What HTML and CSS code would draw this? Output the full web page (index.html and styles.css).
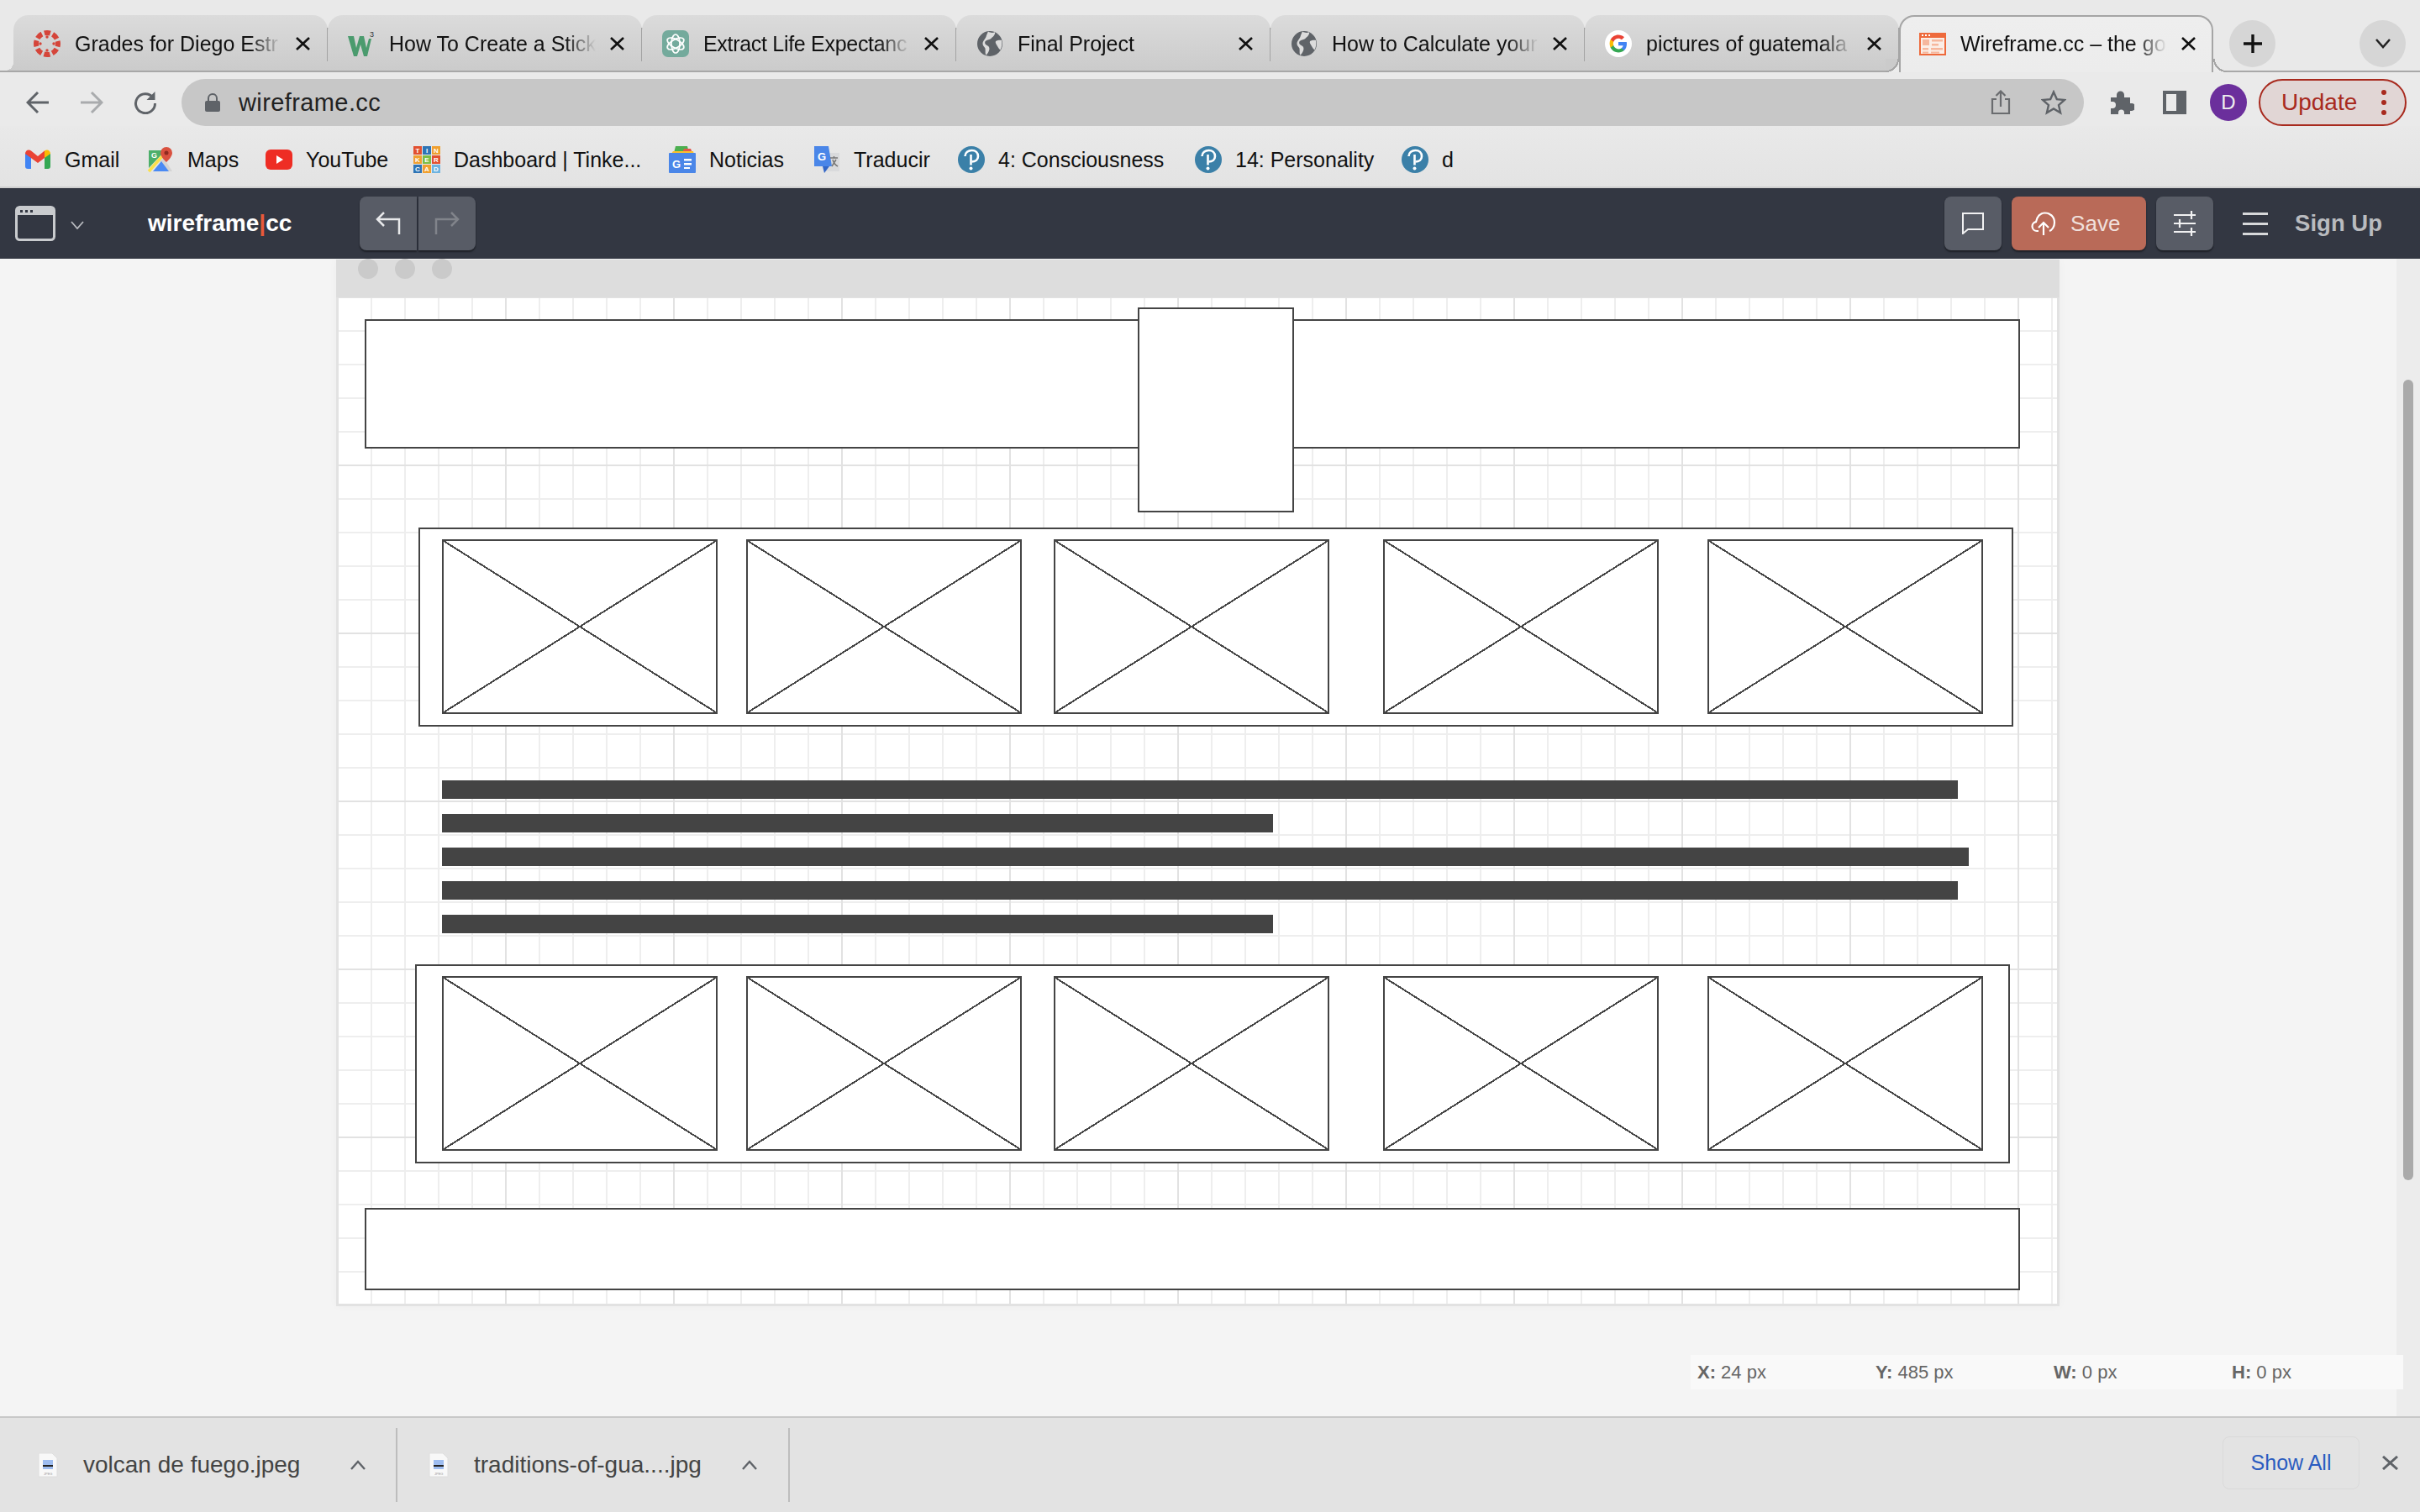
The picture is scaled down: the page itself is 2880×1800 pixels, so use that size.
FILE: index.html
```html
<!DOCTYPE html>
<html lang="en">

<head>
    <meta charset="UTF-8">
    <title>Wireframe.cc – the go-to wireframing tool</title>
    <link rel="stylesheet" href="styles.css">
</head>

<body>
    <!-- browser tabs -->
    <div class="tabstrip">
        <div class="tab">
            <svg class="favicon" viewBox="0 0 32 32"><circle cx="16" cy="16" r="13" fill="none" stroke="#d5453a" stroke-width="6" stroke-dasharray="7.200 3" stroke-dashoffset="3.600"/><g fill="#d5453a"><circle cx="16" cy="8" r="1.700"/><circle cx="16" cy="24" r="1.700"/><circle cx="8" cy="16" r="1.700"/><circle cx="24" cy="16" r="1.700"/></g></svg>
            <span class="tab-title">Grades for Diego Estr</span>
            <svg class="tab-x" viewBox="0 0 17 16"><use href="#close"/></svg>
        </div>
        <div class="tab">
            <svg class="favicon" viewBox="0 0 32 32"><path d="M0 7h7l3 14 4-14h5l3 14 3-11h3l-5 21h-4l-4-14-4 14H7z" fill="#4b9b6e"/><text x="26" y="8" class="tiny-sup">3</text></svg>
            <span class="tab-title">How To Create a Stick</span>
            <svg class="tab-x" viewBox="0 0 17 16"><use href="#close"/></svg>
        </div>
        <div class="tab">
            <svg class="favicon" viewBox="0 0 32 32"><rect width="32" height="32" rx="7" fill="#74aa9c"/><g fill="none" stroke="#fff" stroke-width="1.700"><ellipse cx="16" cy="16" rx="5" ry="11"/><ellipse cx="16" cy="16" rx="5" ry="11" transform="rotate(60 16 16)"/><ellipse cx="16" cy="16" rx="5" ry="11" transform="rotate(120 16 16)"/></g></svg>
            <span class="tab-title tab-title-tight">Extract Life Expectanc</span>
            <svg class="tab-x" viewBox="0 0 17 16"><use href="#close"/></svg>
        </div>
        <div class="tab">
            <svg class="favicon" viewBox="0 0 32 32"><use href="#globe"/></svg>
            <span class="tab-title">Final Project</span>
            <svg class="tab-x" viewBox="0 0 17 16"><use href="#close"/></svg>
        </div>
        <div class="tab">
            <svg class="favicon" viewBox="0 0 32 32"><use href="#globe"/></svg>
            <span class="tab-title">How to Calculate your</span>
            <svg class="tab-x" viewBox="0 0 17 16"><use href="#close"/></svg>
        </div>
        <div class="tab">
            <svg class="favicon" viewBox="0 0 32 32"><circle cx="16" cy="16" r="16" fill="#fff"/><path d="M26 16.300c0-.8-.1-1.500-.2-2.200H16v4.200h5.600c-.2 1.300-1 2.400-2.100 3.200v2.600h3.400c2-1.900 3.100-4.600 3.100-7.800z" fill="#4285f4"/><path d="M16 26.500c2.800 0 5.200-.9 6.900-2.500l-3.400-2.600c-.9.600-2.100 1-3.500 1-2.700 0-5-1.800-5.800-4.300H6.700v2.700C8.400 24.300 11.900 26.500 16 26.500z" fill="#34a853"/><path d="M10.200 18.100c-.5-1.400-.5-2.900 0-4.300v-2.700H6.700c-1.500 2.900-1.500 6.800 0 9.700z" fill="#fbbc05"/><path d="M16 9.700c1.500 0 2.900.5 4 1.600l3-3C21.100 6.500 18.700 5.500 16 5.500c-4.100 0-7.600 2.300-9.300 5.600l3.500 2.700c.8-2.400 3.100-4.100 5.800-4.100z" fill="#ea4335"/></svg>
            <span class="tab-title">pictures of guatemala</span>
            <svg class="tab-x" viewBox="0 0 17 16"><use href="#close"/></svg>
        </div>
        <div class="tab tab-active">
            <svg class="favicon" viewBox="0 0 32 32"><rect y="3" width="32" height="27" fill="#ee6a3c"/><rect x="2" y="9" width="28" height="19" fill="#fbeee7"/><path d="M3 5h2v2H3zM7 5h2v2H7zM11 5h2v2h-2z" fill="#fff"/><path d="M4 11h8v7H4zM15 11h13v2.500H15zM15 16h8v2.500h-8zM4 21h7v2.500H4zM14 21h14v2.500H14zM4 25.500h7v2H4zM14 25.500h10v2H14z" fill="#f6b79d"/></svg>
            <span class="tab-title">Wireframe.cc – the go</span>
            <svg class="tab-x" viewBox="0 0 17 16"><use href="#close"/></svg>
        </div>
        <div class="strip-btn strip-plus">
            <svg class="icon-plus" viewBox="0 0 22 22"><path d="M11 0v22M0 11h22" fill="none" stroke="#111" stroke-width="3.400"/></svg>
        </div>
        <div class="strip-btn strip-more">
            <svg class="icon-chev" viewBox="0 0 18 12"><path d="M1 1l8 9 8-9" fill="none" stroke="#222" stroke-width="2.500"/></svg>
        </div>
    </div>

    <!-- address bar row -->
    <div class="toolbar">
        <svg class="nav-icon" viewBox="0 0 28 28"><path d="M27 14H3M14 2L2 14l12 12" fill="none" stroke="#5f6368" stroke-width="3"/></svg>
        <svg class="nav-icon nav-off" viewBox="0 0 28 28"><path d="M1 14h24M14 2l12 12-12 12" fill="none" stroke="#a9abad" stroke-width="3"/></svg>
        <svg class="nav-icon" viewBox="0 0 28 28"><path d="M23 8a11.500 11.500 0 1 0 2.500 7" fill="none" stroke="#5f6368" stroke-width="3"/><path d="M25.500 1v10h-10z" fill="#5f6368"/></svg>
        <div class="omnibox">
            <svg class="lock" viewBox="0 0 18 22"><path d="M4 10V6a5 5 0 0 1 10 0v4" fill="none" stroke="#5f6368" stroke-width="2"/><rect y="9" width="18" height="13" rx="2" fill="#5f6368"/></svg>
            <span class="url">wireframe.cc</span>
            <svg class="share" viewBox="0 0 24 30"><path d="M7 11H2v17h20V11h-5M12 20V2M6.500 7L12 1.500 17.500 7" fill="none" stroke="#6a6c6f" stroke-width="2.200"/></svg>
            <svg class="star" viewBox="0 0 30 30"><path d="M15 2.500l3.800 8.600 9.200.9-7 6.100 2.100 9.200-8.100-4.800-8.100 4.800 2.100-9.200-7-6.100 9.200-.9z" fill="none" stroke="#5f6368" stroke-width="2.400"/></svg>
        </div>
        <svg class="ext" viewBox="0 0 30 30"><path d="M2 9h7V6a4.500 4.500 0 0 1 9 0v3h7v7h2a4.500 4.500 0 0 1 0 9h-2v4h-7v-2a3.500 3.500 0 0 0-7 0v2H2v-7h2a4 4 0 0 0 0-8H2z" fill="#5f6368"/></svg>
        <div class="sidepanel"></div>
        <div class="avatar">D</div>
        <div class="update">
            <span>Update</span>
            <span class="update-dots"><i></i><i></i><i></i></span>
        </div>
    </div>

    <!-- bookmarks -->
    <div class="bookmarks">
        <div class="bm bm-gmail">
            <svg viewBox="0 0 30 32"><path d="M0 9h7v18H3a3 3 0 0 1-3-3z" fill="#4285f4"/><path d="M23 9h7v15a3 3 0 0 1-3 3h-4z" fill="#34a853"/><path d="M0 9c0-4 4-6 7-3.500L15 12l8-6.500V14l-8 6-15-11z" fill="#ea4335"/><path d="M23 5.500C26 3 30 5 30 9l-7 5z" fill="#fbbc05"/></svg>
            Gmail
        </div>
        <div class="bm bm-maps">
            <svg viewBox="0 0 32 32"><path d="M2 5h20L2 26z" fill="#4caf6a"/><path d="M20 14l10 16h-6l-9-12z" fill="#d4d4d4"/><path d="M7 30l10-12 9 12z" fill="#4a8af4"/><path d="M2 30L18 12" stroke="#fbe04b" stroke-width="3.500"/><text x="5" y="14" class="maps-g">G</text><path d="M23 1a7 7 0 0 1 7 7c0 5-7 11-7 11s-7-6-7-11a7 7 0 0 1 7-7z" fill="#d9513f"/><circle cx="23" cy="8" r="2.500" fill="#8e2a20"/></svg>
            Maps
        </div>
        <div class="bm bm-yt">
            <svg viewBox="0 0 32 32"><rect y="4" width="32" height="24" rx="6" fill="#ee2d24"/><path d="M13 11l8 5-8 5z" fill="#fff"/></svg>
            YouTube
        </div>
        <div class="bm bm-tink">
            <div class="tink-icon">
                <b class="t-red">T</b><b class="t-blue">I</b><b class="t-orange">N</b>
                <b class="t-orange">K</b><b class="t-green">E</b><b class="t-red">R</b>
                <b class="t-blue">C</b><b class="t-orange">A</b><b class="t-sky">D</b>
            </div>
            Dashboard | Tinke...
        </div>
        <div class="bm bm-news">
            <svg viewBox="0 0 32 32"><path d="M6 8l2-8h14l2 8z" fill="#4caf50"/><path d="M16 8l2-5h8l2 5z" fill="#e2574c"/><path d="M2 10l3-4h24l1 4z" fill="#fbc02d"/><rect y="8" width="32" height="24" rx="1" fill="#4a86e8"/><text x="4" y="26" class="news-g">G</text><path d="M18 15h9v2.500h-9zM18 20h9v2.500h-9zM18 25h7v2h-7z" fill="#fff"/></svg>
            Noticias
        </div>
        <div class="bm bm-trans">
            <svg viewBox="0 0 30 32"><rect x="12" y="8" width="18" height="22" fill="#d9dadc"/><path d="M0 0h17l4 24H0z" fill="#4a86e8"/><path d="M10 24h8l-6 8z" fill="#3367c7"/><text x="4" y="17" class="news-g">G</text><path d="M19 14h9M23.500 12v2M21 24l5-8M22 16c1 4 4 7 6 8" fill="none" stroke="#777" stroke-width="1.500"/></svg>
            Traducir
        </div>
        <div class="bm bm-p1">
            <svg viewBox="0 0 32 32"><use href="#pearson"/></svg>
            4: Consciousness
        </div>
        <div class="bm bm-p2">
            <svg viewBox="0 0 32 32"><use href="#pearson"/></svg>
            14: Personality
        </div>
        <div class="bm bm-p3">
            <svg viewBox="0 0 32 32"><use href="#pearson"/></svg>
            d
        </div>
    </div>

    <!-- wireframe.cc app bar -->
    <div class="appbar">
        <svg class="win-icon" viewBox="0 0 48 42"><rect x="1.500" y="1.500" width="45" height="39" rx="4" fill="none" stroke="#c9cbce" stroke-width="3"/><path d="M3 4a2 2 0 0 1 2-2h38a2 2 0 0 1 2 2v7H3z" fill="#c9cbce"/><path d="M6 5h3v3H6zM12 5h3v3h-3zM18 5h3v3h-3z" fill="#333742"/></svg>
        <svg class="app-chev" viewBox="0 0 16 10"><path d="M1 1l7 8 7-8" fill="none" stroke="#b9bbc0" stroke-width="1.800"/></svg>
        <div class="logo">wireframe<span class="logo-bar">|</span>cc</div>
        <div class="history">
            <div class="hist-btn">
                <svg viewBox="0 0 30 28"><path d="M28 27V9H3M10 1L2 9l8 8" fill="none" stroke="#e8e9eb" stroke-width="2.500"/></svg>
            </div>
            <div class="hist-btn">
                <svg viewBox="0 0 30 28"><path d="M2 27V9h25M20 1l8 8-8 8" fill="none" stroke="#81848b" stroke-width="2.500"/></svg>
            </div>
        </div>
        <div class="app-right">
            <div class="app-btn">
                <svg class="comment" viewBox="0 0 26 26"><path d="M1 1h24v19H7l-6 5z" fill="none" stroke="#f1f1f2" stroke-width="2"/></svg>
            </div>
            <div class="save-btn">
                <svg class="cloud" viewBox="0 0 32 28"><path d="M9 23H7a5.500 5.500 0 0 1-1-10.900C7 6 11 1.500 16.500 1.500 23 1.500 28 6 28 13c0 5-3 9-6 10" fill="none" stroke="#fff" stroke-width="2.200"/><path d="M15 28V13M9 19l6-6 6 6" fill="none" stroke="#fff" stroke-width="2.200"/></svg>
                <span>Save</span>
            </div>
            <div class="app-btn">
                <svg class="sliders" viewBox="0 0 26 30"><path d="M0 5h26M0 15h26M0 25h26M21 0v10M7 10v10M21 20v10" fill="none" stroke="#f1f1f2" stroke-width="2.200"/></svg>
            </div>
            <div class="burger"><i></i><i></i><i></i></div>
            <div class="signup">Sign Up</div>
        </div>
    </div>

    <!-- editor area -->
    <div class="stage">
        <div class="canvas">
            <div class="canvas-head"><i></i><i></i><i></i></div>
            <div class="grid"></div>

            <div class="wf wf-top"></div>
            <div class="wf wf-tab"></div>

            <div class="wf wf-row wf-row-a"></div>
            <div class="wf-ph ph-1 ph-a"></div>
            <div class="wf-ph ph-2 ph-a"></div>
            <div class="wf-ph ph-3 ph-a"></div>
            <div class="wf-ph ph-4 ph-a"></div>
            <div class="wf-ph ph-5 ph-a"></div>

            <div class="wf-line line-1"></div>
            <div class="wf-line line-2"></div>
            <div class="wf-line line-3"></div>
            <div class="wf-line line-4"></div>
            <div class="wf-line line-5"></div>

            <div class="wf wf-row wf-row-b"></div>
            <div class="wf-ph ph-1 ph-b"></div>
            <div class="wf-ph ph-2 ph-b"></div>
            <div class="wf-ph ph-3 ph-b"></div>
            <div class="wf-ph ph-4 ph-b"></div>
            <div class="wf-ph ph-5 ph-b"></div>

            <div class="wf wf-foot"></div>
        </div>

        <div class="coords">
            <span class="coord"><b>X:</b> 24 px</span>
            <span class="coord"><b>Y:</b> 485 px</span>
            <span class="coord"><b>W:</b> 0 px</span>
            <span class="coord"><b>H:</b> 0 px</span>
        </div>

        <div class="scrollbar"><div class="thumb"></div></div>
    </div>

    <!-- downloads shelf -->
    <div class="shelf">
        <div class="dl">
            <svg class="dl-icon" viewBox="0 0 24 30"><use href="#jpeg"/></svg>
            <span class="dl-name">volcan de fuego.jpeg</span>
            <svg class="dl-caret" viewBox="0 0 18 12"><path d="M1 11l8-9 8 9" fill="none" stroke="#5f6368" stroke-width="2.400"/></svg>
        </div>
        <div class="dl dl-two">
            <svg class="dl-icon" viewBox="0 0 24 30"><use href="#jpeg"/></svg>
            <span class="dl-name">traditions-of-gua....jpg</span>
            <svg class="dl-caret" viewBox="0 0 18 12"><path d="M1 11l8-9 8 9" fill="none" stroke="#5f6368" stroke-width="2.400"/></svg>
        </div>
        <div class="show-all">Show All</div>
        <svg class="shelf-x" viewBox="0 0 19 17"><path d="M1 1l17 15M18 1L1 16" fill="none" stroke="#5f6368" stroke-width="3"/></svg>
    </div>

    <!-- shared icons -->
    <svg class="defs" width="0" height="0">
        <defs>
            <path id="close" d="M1 1l15 14M16 1L1 15" fill="none" stroke="#111" stroke-width="2.600"/>
            <g id="globe">
                <circle cx="16" cy="16" r="15" fill="#5f6368"/>
                <path d="M14 1.500c3 2 6 1.500 8 .8 1 3-3 6-5 8-2 1.500-5 1-6.500 3-1 2 0 4 2.500 5 2.500 1 3 3.500 2 6-.7 2-2 4-3.500 5.500-1.500-2-.5-5-1-8-.5-2-3-3-3-6s3-5 4-8c.5-2 1.500-4.300 2.500-6.300z" fill="#dcdcdc"/>
                <path d="M23 13c2-1 5-1.500 7-1 .7 4 .3 8-1.500 11.500-1.500-1-2.500-3-3.500-4.500-1-2-3-4-2-6z" fill="#dcdcdc"/>
            </g>
            <g id="pearson">
                <circle cx="16" cy="16" r="16" fill="#3b80a8"/>
                <path d="M8.500 12C8.500 7.500 12.500 5 16.500 5 21 5 24 8 24 12c0 4-3 6.500-7.500 6.500" fill="none" stroke="#fff" stroke-width="2.600"/>
                <path d="M15.500 10v12.500" fill="none" stroke="#fff" stroke-width="2.600"/>
                <circle cx="15.500" cy="26.500" r="2" fill="#fff"/>
            </g>
            <g id="jpeg">
                <path d="M1 1h16l6 6v22H1z" fill="#f8f8f8" stroke="#dedede"/>
                <rect x="6" y="9" width="12" height="11" fill="#9dbcf0"/>
                <rect x="6" y="15" width="12" height="2" fill="#222"/>
                <text x="7" y="27" class="jpeg-tag">JPEG</text>
            </g>
        </defs>
    </svg>
</body>

</html>
```

FILE: styles.css
```css
/* page base */
html,
body {
    margin: 0;
    height: 100%;
}

body {
    width: 2880px;
    height: 1800px;
    overflow: hidden;
    display: flex;
    flex-direction: column;
    font-family: "Liberation Sans", Arial, sans-serif;
    color: #111;
    background-color: #f4f4f4;
}

/* tab strip */
.tabstrip {
    height: 86px;
    box-sizing: border-box;
    display: flex;
    align-items: flex-end;
    padding-left: 16px;
    background: #e9e9e9;
    border-bottom: 2px solid #a8a8a8;
    position: relative;
    flex: none;
}

.tab {
    width: 374px;
    height: 66px;
    box-sizing: border-box;
    flex: none;
    display: flex;
    align-items: center;
    padding: 2px 0 0 24px;
    background: linear-gradient(#dbdbdb, #cbcbcb);
    border-radius: 18px 18px 0 0;
    position: relative;
}

.tab::after {
    content: "";
    position: absolute;
    right: -1px;
    top: 15px;
    width: 2px;
    height: 40px;
    background: #a3a3a3;
}

.tab:first-child::before {
    content: "";
    position: absolute;
    left: -10px;
    bottom: 0;
    width: 10px;
    height: 10px;
    background: radial-gradient(circle at 0 0, #e9e9e9 10px, #cbcbcb 10px);
}

.tab-active {
    height: 68px;
    margin-bottom: -2px;
    padding: 0 0 2px 22px;
    background: linear-gradient(#eeeeee, #ececec);
    border: 2px solid #a5a5a5;
    border-bottom: none;
    z-index: 1;
}

/* the two curves where the open tab meets the strip line */
.tab-active::before,
.tab-active::after {
    content: "";
    position: absolute;
    bottom: 0;
    top: auto;
    width: 16px;
    height: 16px;
}

.tab-active::before {
    left: -18px;
    background: radial-gradient(circle at 0 0, #cbcbcb 14px, #a5a5a5 14px, #a5a5a5 16px, #ececec 16px);
}

.tab-active::after {
    right: -18px;
    background: radial-gradient(circle at 100% 0, #e9e9e9 14px, #a5a5a5 14px, #a5a5a5 16px, #ececec 16px);
}

.favicon {
    width: 32px;
    height: 32px;
    flex: none;
}

.tiny-sup {
    font-size: 9px;
    fill: #333;
}

.maps-g {
    font-size: 9px;
    font-weight: bold;
    fill: #fff;
}

.jpeg-tag {
    font-size: 4px;
    fill: #999;
}

.tab-title {
    margin-left: 17px;
    width: 246px;
    flex: none;
    overflow: hidden;
    white-space: nowrap;
    font-size: 25px;
    line-height: 32px;
    -webkit-mask-image: linear-gradient(to right, #000 85%, transparent 100%);
    mask-image: linear-gradient(to right, #000 85%, transparent 100%);
}

.tab-title-tight {
    letter-spacing: -0.3px;
}

.tab-x {
    margin-left: 17px;
    width: 17px;
    height: 16px;
    flex: none;
}

.strip-btn {
    position: absolute;
    top: 24px;
    width: 55px;
    height: 56px;
    border-radius: 50%;
    background: #d6d6d6;
    display: flex;
    align-items: center;
    justify-content: center;
}

.strip-plus {
    left: 2653px;
}

.strip-more {
    left: 2808px;
}

.icon-plus {
    width: 22px;
    height: 22px;
}

.icon-chev {
    width: 18px;
    height: 12px;
}

/* toolbar */
.toolbar {
    height: 64px;
    flex: none;
    display: flex;
    align-items: flex-start;
    padding-left: 31px;
    background: #eaeaea;
    box-sizing: border-box;
    padding-top: 8px;
}

.nav-icon {
    width: 28px;
    height: 28px;
    margin: 14px 36px 0 0;
    flex: none;
}

.omnibox {
    width: 2264px;
    height: 56px;
    margin-left: -7px;
    box-sizing: border-box;
    flex: none;
    display: flex;
    align-items: center;
    padding-left: 28px;
    background: #c7c7c7;
    border-radius: 28px;
}

.lock {
    width: 18px;
    height: 22px;
}

.url {
    margin-left: 22px;
    font-size: 29px;
    letter-spacing: 0.4px;
    color: #222;
}

.share {
    width: 24px;
    height: 30px;
    margin-left: auto;
}

.star {
    width: 30px;
    height: 30px;
    margin: 0 21px 0 36px;
}

.ext {
    width: 30px;
    height: 30px;
    margin: 13px 0 0 30px;
    flex: none;
}

.sidepanel {
    width: 28px;
    height: 28px;
    margin: 14px 0 0 34px;
    box-sizing: border-box;
    border: 4px solid #5f6368;
    border-right-width: 12px;
    flex: none;
}

.avatar {
    width: 44px;
    height: 44px;
    margin: 6px 0 0 28px;
    border-radius: 50%;
    background: #6b2f9c;
    color: #eee;
    font-size: 24px;
    line-height: 44px;
    text-align: center;
    flex: none;
}

.update {
    width: 176px;
    height: 56px;
    margin-left: 14px;
    box-sizing: border-box;
    display: flex;
    align-items: center;
    padding-left: 25px;
    border: 2px solid #a82a1e;
    border-radius: 28px;
    background: #e1d6d5;
    color: #a82a1e;
    font-size: 28px;
    flex: none;
}

.update-dots {
    margin-left: 29px;
    display: flex;
    flex-direction: column;
    gap: 6px;
}

.update-dots i {
    width: 6px;
    height: 6px;
    border-radius: 50%;
    background: #a82a1e;
}

/* bookmarks */
.bookmarks {
    height: 74px;
    box-sizing: border-box;
    flex: none;
    display: flex;
    align-items: center;
    padding-bottom: 6px;
    background: linear-gradient(#e9e9e9, #e3e3e3);
    border-bottom: 2px solid #cfcfcf;
    font-size: 25px;
    position: relative;
}

.bm {
    position: absolute;
    top: 24px;
    display: flex;
    align-items: center;
    height: 32px;
    gap: 16px;
    white-space: nowrap;
}

.bm svg {
    width: 32px;
    height: 32px;
    flex: none;
}

.bm-gmail { left: 29px; }
.bm-maps { left: 175px; }
.bm-yt { left: 316px; }
.bm-tink { left: 492px; }
.bm-news { left: 796px; }
.bm-trans { left: 968px; }
.bm-p1 { left: 1140px; }
.bm-p2 { left: 1422px; }
.bm-p3 { left: 1668px; }

.tink-icon {
    width: 32px;
    height: 32px;
    flex: none;
    display: grid;
    grid-template-columns: repeat(3, 1fr);
    grid-template-rows: repeat(3, 1fr);
    gap: 1px;
}

.tink-icon b {
    display: flex;
    align-items: center;
    justify-content: center;
    font-size: 8px;
    color: #fff;
}

.t-red { background: #e2502f; }
.t-blue { background: #2e74b5; }
.t-orange { background: #f0a030; }
.t-green { background: #7cbd45; }
.t-sky { background: #6db3e0; }

.news-g {
    font-size: 13px;
    font-weight: bold;
    fill: #fff;
}

/* app bar */
.appbar {
    height: 84px;
    flex: none;
    position: relative;
    z-index: 2;
    display: flex;
    align-items: center;
    background: #333742;
    padding-left: 18px;
    box-sizing: border-box;
}

.win-icon {
    width: 48px;
    height: 42px;
    flex: none;
}

.app-chev {
    width: 16px;
    height: 10px;
    margin: 4px 0 0 18px;
    flex: none;
}

.logo {
    margin-left: 76px;
    width: 252px;
    color: #fff;
    font-size: 28px;
    font-weight: bold;
    flex: none;
}

.logo-bar {
    color: #e8593a;
}

.history {
    display: flex;
    gap: 2px;
    flex: none;
}

.hist-btn {
    width: 68px;
    height: 64px;
    display: flex;
    align-items: center;
    justify-content: center;
    background: #585c66;
    box-shadow: 0 2px 2px #1d1f26;
}

.hist-btn:first-child {
    border-radius: 8px 0 0 8px;
}

.hist-btn:last-child {
    border-radius: 0 8px 8px 0;
}

.hist-btn svg {
    width: 30px;
    height: 28px;
}

.app-right {
    margin-left: auto;
    display: flex;
    align-items: center;
    gap: 12px;
    padding-right: 45px;
}

.app-btn {
    width: 68px;
    height: 64px;
    display: flex;
    align-items: center;
    justify-content: center;
    background: #585c66;
    border-radius: 8px;
    box-shadow: 0 2px 2px #1d1f26;
}

.comment {
    width: 26px;
    height: 26px;
}

.sliders {
    width: 26px;
    height: 30px;
}

.save-btn {
    width: 160px;
    height: 64px;
    box-sizing: border-box;
    display: flex;
    align-items: center;
    padding-left: 23px;
    gap: 15px;
    background: #b96a58;
    border-radius: 8px;
    box-shadow: 0 2px 2px #1d1f26;
    color: #f0e0dc;
    font-size: 26px;
}

.cloud {
    width: 32px;
    height: 28px;
}

.burger {
    width: 30px;
    margin-left: 23px;
    display: flex;
    flex-direction: column;
    gap: 9px;
}

.burger i {
    height: 3px;
    background: #d7d8da;
}

.signup {
    margin-left: 20px;
    color: #b9bbbf;
    font-size: 27.500px;
    font-weight: bold;
}

/* editor stage */
.stage {
    height: 1378px;
    flex: none;
    position: relative;
    overflow: hidden;
    background: #f4f4f4;
}

.canvas {
    position: absolute;
    left: 400px;
    top: 1px;
    width: 2051px;
    height: 1246px;
    box-sizing: border-box;
    background: #fff;
    border: solid #e2e2e2;
    border-width: 0 3px 3px 2px;
    box-shadow: 0 0 10px rgba(0, 0, 0, 0.03);
}

.canvas-head {
    height: 45px;
    box-sizing: border-box;
    display: flex;
    gap: 20px;
    padding-left: 24px;
    background: #dddddd;
    margin: 0 -3px 0 -2px;
    position: relative;
    z-index: 1;
}

.canvas-head i {
    width: 24px;
    height: 24px;
    margin: -1px 0 0 2px;
    border-radius: 50%;
    background: #cacaca;
}

.canvas-head i + i {
    margin-left: 0;
}

/* 40px squares, heavier line every 200px */
.grid {
    position: absolute;
    left: 0;
    top: 45px;
    right: 0;
    bottom: 0;
    background-image:
        linear-gradient(to right, #e2e2e2 2px, transparent 2px),
        linear-gradient(to bottom, #e2e2e2 2px, transparent 2px),
        linear-gradient(to right, #eeeeee 2px, transparent 2px),
        linear-gradient(to bottom, #eeeeee 2px, transparent 2px);
    background-size: 200px 200px, 200px 200px, 40px 40px, 40px 40px;
    background-position: 199px 0, 0 199px, 39px 0, 0 39px;
}

.wf,
.wf-ph {
    position: absolute;
    box-sizing: border-box;
    background-color: #fff;
    border: 2px solid #444;
}

.wf-top { left: 32px; top: 71px; width: 1970px; height: 154px; }
.wf-tab { left: 952px; top: 57px; width: 186px; height: 244px; }
.wf-row { height: 237px; }
.wf-row-a { left: 96px; top: 319px; width: 1898px; }
.wf-row-b { left: 92px; top: 839px; width: 1898px; }
.wf-foot { left: 32px; top: 1129px; width: 1970px; height: 98px; }

/* image placeholder: a box with two diagonals */
.wf-ph {
    width: 328px;
    height: 208px;
    background-image:
        linear-gradient(to top right, transparent calc(50% - 1px), #444 calc(50% - 1px), #444 calc(50% + 1px), transparent calc(50% + 1px)),
        linear-gradient(to bottom right, transparent calc(50% - 1px), #444 calc(50% - 1px), #444 calc(50% + 1px), transparent calc(50% + 1px));
}

.ph-a { top: 333px; }
.ph-b { top: 853px; }
.ph-1 { left: 124px; }
.ph-2 { left: 486px; }
.ph-3 { left: 852px; }
.ph-4 { left: 1244px; }
.ph-5 { left: 1630px; }

.wf-line {
    position: absolute;
    left: 124px;
    height: 22px;
    background: #444;
}

.line-1 { top: 620px; width: 1804px; }
.line-2 { top: 660px; width: 989px; }
.line-3 { top: 700px; width: 1817px; }
.line-4 { top: 740px; width: 1804px; }
.line-5 { top: 780px; width: 989px; }

.coords {
    position: absolute;
    left: 2012px;
    top: 1305px;
    width: 848px;
    height: 41px;
    display: flex;
    align-items: center;
    padding-left: 8px;
    box-sizing: border-box;
    background: #f9f9f9;
    color: #666;
    font-size: 22px;
    z-index: 1;
}

.coord {
    width: 212px;
    flex: none;
}

.scrollbar {
    position: absolute;
    right: 0;
    top: 0;
    bottom: 0;
    width: 28px;
    background: #ececec;
}

.thumb {
    position: absolute;
    left: 8px;
    top: 144px;
    width: 12px;
    height: 953px;
    border-radius: 6px;
    background: #aaaaaa;
}

/* downloads shelf */
.shelf {
    height: 114px;
    flex: none;
    box-sizing: border-box;
    position: relative;
    background: #e3e3e3;
    border-top: 2px solid #c8c8c8;
    color: #444;
    font-size: 28px;
}

.dl {
    position: absolute;
    left: 45px;
    top: 12px;
    width: 428px;
    height: 88px;
    display: flex;
    align-items: center;
    box-sizing: border-box;
    border-right: 2px solid #bdbdbd;
}

.dl-two {
    left: 510px;
    width: 430px;
}

.dl-icon {
    width: 24px;
    height: 30px;
    flex: none;
}

.dl-name {
    margin-left: 30px;
    white-space: nowrap;
}

.dl-caret {
    position: absolute;
    left: 372px;
    top: 38px;
    width: 18px;
    height: 12px;
}

.dl-two .dl-caret {
    left: 373px;
}

.show-all {
    position: absolute;
    left: 2645px;
    top: 22px;
    width: 163px;
    height: 63px;
    box-sizing: border-box;
    display: flex;
    align-items: center;
    justify-content: center;
    border: 1px solid #dadada;
    border-radius: 8px;
    color: #2a5cc0;
    font-size: 25px;
}

.shelf-x {
    position: absolute;
    left: 2835px;
    top: 45px;
    width: 19px;
    height: 17px;
}

.defs {
    position: absolute;
}
```
